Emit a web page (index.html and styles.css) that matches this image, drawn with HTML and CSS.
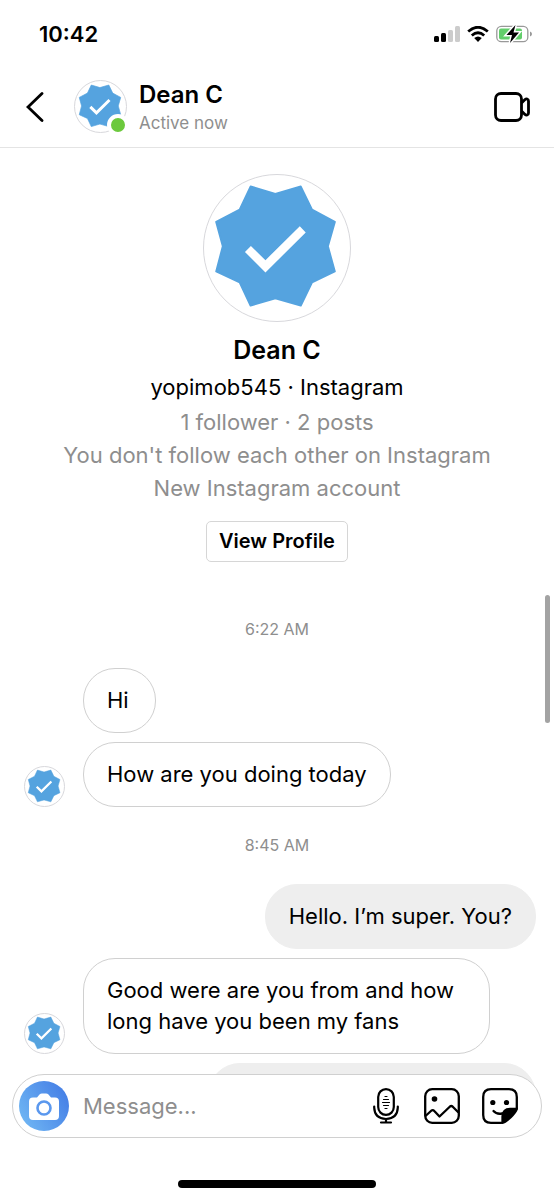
FILE: index.html
```html
<!DOCTYPE html>
<html lang="en">
<head>
<meta charset="utf-8">
<meta name="viewport" content="width=device-width, initial-scale=1">
<title>Dean C</title>
<link rel="stylesheet" href="styles.css">
</head>
<body>
<svg class="defs" aria-hidden="true">
  <defs>
    <symbol id="badge" viewBox="40 27 442 442">
      <path d="M181 62L256 84L333 62L367 132L436 169L415 243L436 319L367 352L333 422L256 400L181 422L148 352L77 319L97 243L77 169L148 132Z" fill="#55a3df" stroke="#55a3df" stroke-width="6" stroke-linejoin="round"/>
      <path d="M164 260L182 242L226 285L330 182L348 201L226 322Z" fill="#fff"/>
    </symbol>
  </defs>
</svg>
<div class="app">
  <header class="top">
    <div class="status">
      <time class="clock">10:42</time>
      <div class="indicators">
        <svg width="26" height="16" viewBox="0 0 26 16" role="img" aria-label="Signal"><rect x="0" y="10" width="5" height="6" rx="1.5"/><rect x="7" y="7" width="5" height="9" rx="1.5"/><rect x="14" y="4" width="5" height="12" rx="1.5" fill="#ccc"/><rect x="21" y="0" width="5" height="16" rx="1.5" fill="#ccc"/></svg>
        <svg width="22" height="16" viewBox="0 0 22 16" role="img" aria-label="Wi-Fi"><path d="M1.200 5.500Q11-3 20.800 5.500M4.800 9.500Q11 4 17.200 9.500" fill="none" stroke="#000" stroke-width="2.800"/><path d="M7.200 12Q11 9 14.800 12L11 16Z"/></svg>
        <svg width="36" height="18" viewBox="0 0 36 18" role="img" aria-label="Battery charging"><rect x=".8" y="1.300" width="31" height="15.400" rx="4.500" fill="#fff" stroke="#999" stroke-width="1.300"/><path d="M34 6.500q2 .8 2 2.500t-2 2.500z" fill="#999"/><rect x="3" y="3.500" width="23" height="11" rx="2" fill="#62ce6b"/><path d="M19.500 0L10.500 10H16L14 18L23 7.500H17.500Z" stroke="#fff" stroke-width="3" paint-order="stroke"/></svg>
      </div>
    </div>
    <div class="contact">
      <button class="icon back" aria-label="Back"><svg width="18" height="30" viewBox="0 0 18 30"><path d="M16 1.500L2 15L16 28.500" fill="none" stroke="#000" stroke-width="2.800" stroke-linecap="round"/></svg></button>
      <div class="presence">
        <svg class="avatar avatar-medium" aria-hidden="true"><use href="#badge"/></svg>
        <span class="online"></span>
      </div>
      <div class="who">
        <h1 class="name">Dean C</h1>
        <p class="active">Active now</p>
      </div>
      <button class="icon" aria-label="Video call"><svg width="36" height="30" viewBox="0 0 36 30" fill="none" stroke="#000" stroke-width="2.800" stroke-linejoin="round"><rect x="1.500" y="1.500" width="26" height="27" rx="5.500"/><path d="M27.500 11L31 7.600Q32 6.700 33.200 7Q34.500 7.400 34.500 9V21Q34.500 22.600 33.200 23Q32 23.300 31 22.400L27.500 19"/></svg></button>
    </div>
  </header>

  <main class="thread">
    <section class="profile">
      <svg class="avatar avatar-large" aria-hidden="true"><use href="#badge"/></svg>
      <h2 class="name">Dean C</h2>
      <p class="handle">yopimob545 · Instagram</p>
      <p class="fact">1 follower · 2 posts</p>
      <p class="fact">You don't follow each other on Instagram</p>
      <p class="fact">New Instagram account</p>
      <button class="view">View Profile</button>
    </section>

    <time class="stamp">6:22 AM</time>
    <div class="row">
      <div class="stack">
        <p class="bubble">Hi</p>
      </div>
    </div>
    <div class="row">
      <svg class="avatar avatar-small" aria-hidden="true"><use href="#badge"/></svg>
      <div class="stack">
        <p class="bubble">How are you doing today</p>
      </div>
    </div>
    <time class="stamp">8:45 AM</time>
    <div class="row sent">
      <p class="bubble">Hello. I’m super. You?</p>
    </div>
    <div class="row">
      <svg class="avatar avatar-small" aria-hidden="true"><use href="#badge"/></svg>
      <div class="stack">
        <p class="bubble">Good were are you from and how long have you been my fans</p>
      </div>
    </div>
    <div class="row sent">
      <p class="bubble pending"></p>
    </div>
  </main>
  <div class="scrollbar"></div>

  <footer class="dock">
    <form class="composer">
      <button type="button" class="camera" aria-label="Camera"><svg width="30" height="27" viewBox="0 0 30 27"><path d="M4 4.500H8L10.500 1.500Q11.500.5 13 .5H17Q18.500.5 19.500 1.500L22 4.500H26Q30 4.500 30 8.500V23Q30 27 26 27H4Q0 27 0 23V8.500Q0 4.500 4 4.500Z" fill="#fff"/><circle cx="15" cy="15" r="6.500" fill="none" stroke="#5b98ee" stroke-width="2.600"/></svg></button>
      <input class="message" type="text" placeholder="Message..." aria-label="Message">
      <button type="button" class="icon" aria-label="Voice message"><svg width="32" height="36" viewBox="-3 0 32 36" fill="none" stroke="#000" stroke-width="2.200" stroke-linecap="round"><rect x="5.200" y="1.100" width="15.600" height="25.800" rx="7.800"/><path d="M1.200 18.500V19.500Q1.500 30.500 13 31Q24.500 30.500 24.800 19.500V18.500M13 31V34.500M8 34.500H18"/><path d="M12 8.500H14M10.500 11.500H15.500M9.500 14.500H16.500M10.500 17.500H15.500M12 20.500H14" stroke-width="1.200"/></svg></button>
      <button type="button" class="icon" aria-label="Photo"><svg width="36" height="36" viewBox="0 0 36 36" fill="none" stroke="#000" stroke-width="2.300" stroke-linejoin="round"><rect x="1.200" y="1.200" width="33.600" height="33.600" rx="7"/><path d="M1.500 28L7.500 22.500Q9 21.500 10.300 23L15.500 28.500L26 18.500Q27.300 17.500 28.500 18.500L34.500 24.500"/><circle cx="10.500" cy="11" r="2.800" fill="#000" stroke="none"/></svg></button>
      <button type="button" class="icon" aria-label="Stickers"><svg width="36" height="36" viewBox="0 0 36 36" fill="none" stroke="#000" stroke-width="2.300" stroke-linejoin="round" stroke-linecap="round"><path d="M19.500 34.800H9Q1.200 34.800 1.200 27V9Q1.200 1.200 9 1.200H27Q34.800 1.200 34.800 9V20.500"/><path d="M20.500 34.800V28.500Q21 21 28 21H34.800Q34 24 28.500 29.500Q23 34.500 20.500 34.800Z" fill="#000"/><path d="M11.500 23Q14.500 26.500 20 25.500"/><circle cx="10.800" cy="14.500" r="2.600" fill="#000" stroke="none"/><circle cx="24.500" cy="14.500" r="2.600" fill="#000" stroke="none"/></svg></button>
    </form>
    <div class="home"></div>
  </footer>
</div>
</body>
</html>
```

FILE: styles.css
```css
* {
  box-sizing: border-box;
}

body {
  margin: 0;
  background: #fff;
  color: #000;
  font-family: Inter, "Liberation Sans", sans-serif;
  font-size: 22px;
}

h1,
h2,
p {
  margin: 0;
}

button {
  padding: 0;
  border: 0;
  background: none;
  color: inherit;
  font: inherit;
}

.defs {
  position: absolute;
  width: 0;
  height: 0;
}

.app {
  position: relative;
  display: flex;
  flex-direction: column;
  height: 100vh;
  overflow: hidden;
}

.top {
  flex: none;
  border-bottom: 1px solid #e4e4e4;
}

.status {
  display: flex;
  justify-content: space-between;
  align-items: center;
  height: 68px;
  padding: 0 22px 0 39px;
}

.clock {
  font-size: 22px;
  font-weight: 600;
}

.indicators {
  display: flex;
  align-items: center;
  gap: 7px;
}

.contact {
  display: flex;
  align-items: center;
  padding: 11px 24px 13px 26px;
}

.icon {
  display: flex;
  flex: none;
}

.back {
  margin-right: 30px;
}

.presence {
  position: relative;
  display: flex;
}

.online {
  position: absolute;
  right: -2px;
  bottom: -3px;
  width: 22px;
  height: 22px;
  border: 4px solid #fff;
  border-radius: 50%;
  background: #6cc93d;
}

.avatar {
  flex: none;
  border: 1px solid #d8d8dc;
  border-radius: 50%;
}

.avatar-small {
  width: 41px;
  height: 41px;
}

.avatar-medium {
  width: 53px;
  height: 53px;
}

.avatar-large {
  width: 148px;
  height: 148px;
}

.who {
  flex: 1;
  margin-left: 12px;
}

.name {
  font-size: 24px;
  font-weight: 600;
  line-height: 32px;
}

.active {
  padding-top: 2px;
  color: #8e8e8e;
  font-size: 17px;
  line-height: 21px;
}

.thread {
  display: flex;
  flex: 1;
  flex-direction: column;
  gap: 9px;
  min-height: 0;
  padding: 26px 18px 0 24px;
}

.profile {
  display: flex;
  flex-direction: column;
  align-items: center;
  margin: 0 -6px 47px -12px;
  text-align: center;
}

.profile .name {
  margin-top: 12px;
  font-size: 25px;
}

.handle {
  margin: 5px 0 3px;
  line-height: 32px;
}

.fact {
  color: #8e8e8e;
  line-height: 33px;
}

.view {
  margin-top: 16px;
  padding: 0 12px;
  border: 1px solid #d6d6d6;
  border-radius: 5px;
  font-size: 20px;
  font-weight: 600;
  line-height: 39px;
}

.stamp {
  margin: 18px -6px 19px -12px;
  color: #8e8e8e;
  font-size: 16px;
  line-height: 22px;
  text-align: center;
}

.profile + .stamp {
  margin-top: 0;
}

.row {
  display: flex;
  align-items: flex-end;
}

.stack {
  display: flex;
  flex: 1;
  margin-left: 59px;
}

.avatar + .stack {
  margin-left: 18px;
}

.sent {
  justify-content: flex-end;
}

.bubble {
  min-width: 73px;
  max-width: 407px;
  padding: 16px 23px;
  border: 1px solid #d0d0d0;
  border-radius: 32px;
  line-height: 31px;
}

.sent .bubble {
  border-color: #eee;
  background: #eee;
}

.sent .pending {
  width: 328px;
  height: 65px;
}

.scrollbar {
  position: absolute;
  top: 595px;
  right: 4px;
  width: 5px;
  height: 128px;
  border-radius: 3px;
  background: #a3a3a3;
}

.dock {
  position: absolute;
  right: 0;
  bottom: 0;
  left: 0;
  padding: 0 12px 12px;
}

.composer {
  display: flex;
  align-items: center;
  gap: 22px;
  height: 64px;
  padding: 0 23px 0 6px;
  border: 1px solid #d0d0d0;
  border-radius: 32px;
  background: #fff;
}

.camera {
  display: flex;
  flex: none;
  align-items: center;
  justify-content: center;
  width: 50px;
  height: 50px;
  margin-right: -8px;
  border-radius: 50%;
  background: linear-gradient(60deg, #74bcf5, #4078e4);
}

.message {
  flex: 1;
  min-width: 0;
  padding: 0;
  border: 0;
  outline: 0;
  background: none;
  color: #000;
  font: inherit;
}

.message::placeholder {
  color: #8e8e8e;
  opacity: 1;
}

.home {
  width: 198px;
  height: 8px;
  margin: 42px auto 0;
  border-radius: 4px;
  background: #000;
}
```
